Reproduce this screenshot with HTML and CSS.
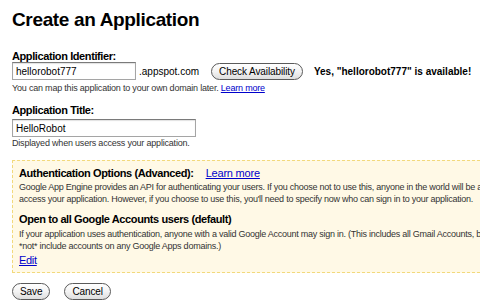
FILE: index.html
```html
<!DOCTYPE html>
<html lang="en">
<head>
    <meta charset="UTF-8">
    <title>Create an Application</title>
    <link rel="stylesheet" href="styles.css">
</head>
<body>
    <h1 class="page-title">Create an Application</h1>

    <form class="app-form">
        <div class="field">
            <label class="field-label" for="appId">Application Identifier:</label>
            <div class="id-row">
                <input class="text-input id-input" id="appId" type="text" value="hellorobot777">
                <span class="suffix">.appspot.com</span>
                <button type="button" class="pill-btn check-btn">Check Availability</button>
                <span class="availability">Yes, "hellorobot777" is available!</span>
            </div>
            <div class="hint">You can map this application to your own domain later. <a href="#">Learn more</a></div>
        </div>

        <div class="field">
            <label class="field-label" for="appTitle">Application Title:</label>
            <input class="text-input title-input" id="appTitle" type="text" value="HelloRobot">
            <div class="hint">Displayed when users access your application.</div>
        </div>

        <div class="auth-box">
            <div class="auth-head">
                <span class="box-title">Authentication Options (Advanced):</span>
                <a href="#">Learn more</a>
            </div>
            <p class="box-text">Google App Engine provides an API for authenticating your users. If you choose not to use this, anyone in the world will be able to<br>access your application. However, if you choose to use this, you'll need to specify now who can sign in to your application.</p>

            <div class="box-title option-title">Open to all Google Accounts users (default)</div>
            <p class="box-text">If your application uses authentication, anyone with a valid Google Account may sign in. (This includes all Gmail Accounts, but does<br>*not* include accounts on any Google Apps domains.)</p>
            <a href="#" class="edit-link">Edit</a>
        </div>

        <div class="actions">
            <button type="button" class="pill-btn">Save</button>
            <button type="button" class="pill-btn">Cancel</button>
        </div>
    </form>
</body>
</html>
```

FILE: styles.css
```css
/* base */
body {
    margin: 0;
    padding: 0 0 0 12px;
    font-family: "Liberation Sans", Arial, sans-serif;
    color: #000;
    background: #fff;
    overflow: hidden;
}

a {
    color: #0000cc;
}

.page-title {
    margin: 0;
    padding-top: 9px;
    font-size: 19px;
    line-height: 22px;
    letter-spacing: -0.35px;
    font-weight: bold;
}

.field:first-child {
    margin-top: 19px;
}

.field + .field {
    margin-top: 10px;
}

.field-label {
    display: block;
    font-size: 11px;
    font-weight: bold;
    line-height: 12px;
    letter-spacing: -0.4px;
}

.id-row {
    display: flex;
    align-items: center;
    white-space: nowrap;
}

.id-row > * {
    flex-shrink: 0;
}

.text-input {
    box-sizing: border-box;
    height: 18px;
    padding: 0 3px;
    border: 1px solid #a5a5a5;
    border-top-color: #7a7a7a;
    box-shadow: inset 0 1px 1px rgba(0, 0, 0, 0.12);
    font-family: inherit;
    font-size: 10px;
    color: #000;
}

.id-input {
    width: 124px;
}

.title-input {
    display: block;
    width: 184px;
    margin-top: 3px;
}

.suffix {
    font-size: 10px;
    margin-left: 3px;
}

.pill-btn {
    height: 17px;
    padding: 0 7px;
    border: 1px solid #5a5a5a;
    border-radius: 9px;
    background: linear-gradient(#fff, #f3f3f3 50%, #dedede);
    font-family: inherit;
    font-size: 10px;
    letter-spacing: -0.1px;
    color: #000;
    line-height: 15px;
    white-space: nowrap;
}

.check-btn {
    margin-left: 12px;
}

.availability {
    margin-left: 11px;
    font-size: 10px;
    font-weight: bold;
}

.hint {
    margin-top: 3px;
    font-size: 9px;
    line-height: 11px;
    letter-spacing: -0.2px;
    color: #333;
}

.field + .field .hint {
    margin-top: 1px;
}

/* authentication options */
.auth-box {
    margin-top: 11px;
    width: 480px;
    padding: 6px 6px 5px;
    background: #fff9e6;
    border: 1px dashed #f2d97c;
    border-right: 0;
    font-size: 11px;
    white-space: nowrap;
}

.auth-head {
    display: flex;
    align-items: baseline;
    gap: 12px;
}

.box-title {
    font-size: 11px;
    font-weight: bold;
    line-height: 13px;
    letter-spacing: -0.4px;
}

.auth-head a {
    font-size: 11px;
    letter-spacing: -0.2px;
}

.box-text {
    margin: 1px 0 0;
    font-size: 9px;
    line-height: 12px;
    letter-spacing: -0.25px;
    color: #333;
}

.option-title {
    margin-top: 8px;
}

.option-title + .box-text {
    margin-top: 2px;
}

.edit-link {
    display: block;
    width: fit-content;
    margin-top: 2px;
    font-size: 11px;
    line-height: 13px;
    letter-spacing: -0.3px;
}

.actions {
    display: flex;
    gap: 14px;
    margin-top: 10px;
}
```
